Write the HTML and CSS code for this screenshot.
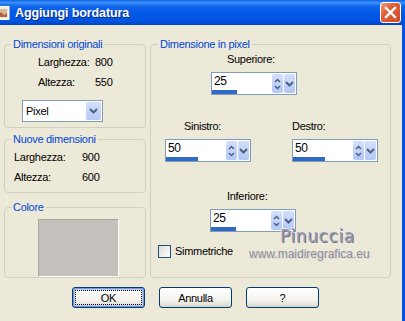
FILE: index.html
```html
<!DOCTYPE html>
<html lang="it">
<head>
    <meta charset="UTF-8">
    <title>Aggiungi bordatura</title>
    <link rel="stylesheet" href="styles.css">
</head>
<body>
    <div class="window">
        <div class="titlebar">
            <svg class="app-icon" width="11" height="14" viewBox="0 0 11 14">
                <rect x="-4" y="0.5" width="14" height="13" fill="#f4ecdf" stroke="#ffffff"/>
                <rect x="-2" y="3" width="10" height="8" fill="#d9b79a"/>
                <path d="M-2 11 L2 6 L5 9 L8 7 L8 11 Z" fill="#b0603c"/>
            </svg>
            <span class="title">Aggiungi bordatura</span>
            <div class="close">
                <svg width="13" height="13" viewBox="0 0 13 13">
                    <path d="M2 2 L11 11 M11 2 L2 11" stroke="#ffffff" stroke-width="2.4" stroke-linecap="square"/>
                </svg>
            </div>
        </div>

        <div class="client">
            <div class="columns">
                <div class="left">
                    <fieldset class="group g-orig">
                        <legend>Dimensioni originali</legend>
                        <div class="dims">
                            <span>Larghezza:</span><span>800</span>
                            <span>Altezza:</span><span>550</span>
                        </div>
                        <div class="select">
                            <span class="select-text">Pixel</span>
                            <span class="drop">
                                <svg width="9" height="6" viewBox="0 0 9 6"><path d="M1 1 L4.5 4.5 L8 1" fill="none" stroke="#4d6185" stroke-width="2"/></svg>
                            </span>
                        </div>
                    </fieldset>

                    <fieldset class="group g-new">
                        <legend>Nuove dimensioni</legend>
                        <div class="dims">
                            <span>Larghezza:</span><span>900</span>
                            <span>Altezza:</span><span>600</span>
                        </div>
                    </fieldset>

                    <fieldset class="group g-color">
                        <legend>Colore</legend>
                        <div class="swatch"></div>
                    </fieldset>
                </div>

                <fieldset class="group g-pixel">
                    <legend>Dimensione in pixel</legend>

                    <div class="field f-top">
                        <label>Superiore:</label>
                        <div class="spin">
                            <div class="spin-val">25<span class="bar" style="width: 25px"></span></div>
                            <span class="sb">
                                <svg width="7" height="12" viewBox="0 0 7 12"><path d="M1 4 L3.5 1.5 L6 4 M1 8 L3.5 10.5 L6 8" fill="none" stroke="#4d6185" stroke-width="1.5"/></svg>
                            </span>
                            <span class="sb">
                                <svg width="9" height="6" viewBox="0 0 9 6"><path d="M1 1 L4.5 4.5 L8 1" fill="none" stroke="#4d6185" stroke-width="2"/></svg>
                            </span>
                        </div>
                    </div>

                    <div class="field-row">
                        <div class="field f-left">
                            <label>Sinistro:</label>
                            <div class="spin">
                                <div class="spin-val">50<span class="bar" style="width: 32px"></span></div>
                                <span class="sb">
                                    <svg width="7" height="12" viewBox="0 0 7 12"><path d="M1 4 L3.5 1.5 L6 4 M1 8 L3.5 10.5 L6 8" fill="none" stroke="#4d6185" stroke-width="1.5"/></svg>
                                </span>
                                <span class="sb">
                                    <svg width="9" height="6" viewBox="0 0 9 6"><path d="M1 1 L4.5 4.5 L8 1" fill="none" stroke="#4d6185" stroke-width="2"/></svg>
                                </span>
                            </div>
                        </div>
                        <div class="field f-right">
                            <label>Destro:</label>
                            <div class="spin">
                                <div class="spin-val">50<span class="bar" style="width: 32px"></span></div>
                                <span class="sb">
                                    <svg width="7" height="12" viewBox="0 0 7 12"><path d="M1 4 L3.5 1.5 L6 4 M1 8 L3.5 10.5 L6 8" fill="none" stroke="#4d6185" stroke-width="1.5"/></svg>
                                </span>
                                <span class="sb">
                                    <svg width="9" height="6" viewBox="0 0 9 6"><path d="M1 1 L4.5 4.5 L8 1" fill="none" stroke="#4d6185" stroke-width="2"/></svg>
                                </span>
                            </div>
                        </div>
                    </div>

                    <div class="field f-bottom">
                        <label>Inferiore:</label>
                        <div class="spin">
                            <div class="spin-val">25<span class="bar" style="width: 25px"></span></div>
                            <span class="sb">
                                <svg width="7" height="12" viewBox="0 0 7 12"><path d="M1 4 L3.5 1.5 L6 4 M1 8 L3.5 10.5 L6 8" fill="none" stroke="#4d6185" stroke-width="1.5"/></svg>
                            </span>
                            <span class="sb">
                                <svg width="9" height="6" viewBox="0 0 9 6"><path d="M1 1 L4.5 4.5 L8 1" fill="none" stroke="#4d6185" stroke-width="2"/></svg>
                            </span>
                        </div>
                    </div>

                    <div class="check-row">
                        <span class="checkbox"></span>
                        <span>Simmetriche</span>
                    </div>
                </fieldset>
            </div>

            <div class="buttons">
                <button class="btn default">OK</button>
                <button class="btn">Annulla</button>
                <button class="btn">?</button>
            </div>

            <div class="watermark">
                <div class="wm-name">Pinuccia</div>
                <div class="wm-site">www.maidiregrafica.eu</div>
            </div>
        </div>
    </div>
</body>
</html>
```

FILE: styles.css
```css
body {
    margin: 0;
    font-family: 'Liberation Sans', Arial, sans-serif;
    font-size: 11px;
    letter-spacing: -0.3px;
    color: #000;
    background: #ece9d8;
}
.window {
    width: 405px;
    height: 321px;
    display: flex;
    flex-direction: column;
    overflow: hidden;
}

/* barra del titolo */
.titlebar {
    height: 25px;
    flex: none;
    display: flex;
    align-items: center;
    background: linear-gradient(to bottom, #0a62e8 0%, #3d8ff7 10%, #1266ec 25%, #0058e6 55%, #0053de 85%, #0044c4 100%);
}
.app-icon {
    margin-left: -1px;
    margin-top: 1px;
}
.title {
    margin-left: 5px;
    color: #fff;
    font-weight: bold;
    font-size: 12.5px;
    letter-spacing: -0.1px;
    text-shadow: 1px 1px 0 #0a2b8a;
}
.close {
    margin-left: auto;
    margin-right: 4px;
    margin-top: -1px;
    width: 19px;
    height: 19px;
    border: 1px solid #fff;
    border-radius: 3px;
    background: linear-gradient(135deg, #f0a58a 0%, #e2603a 35%, #cf4a25 100%);
    display: flex;
    align-items: center;
    justify-content: center;
}

.client {
    flex: 1;
    position: relative;
    padding: 13px 0 0 4px;
    border-right: 3px solid #0552e0;
}
.columns {
    display: grid;
    grid-template-columns: 142px 241px;
    column-gap: 4px;
}
.left {
    display: flex;
    flex-direction: column;
}

/* riquadri */
.group {
    margin: 0;
    padding: 0;
    min-width: 0;
    border: 1px solid #d0d0bf;
    border-radius: 4px;
}
.group legend {
    margin-left: 6px;
    padding: 0 2px;
    line-height: 13px;
    color: #0046d5;
}
.g-orig {
    padding: 1px 0 5px 0;
}
.g-new {
    margin-top: 5px;
    padding: 1px 0 5px 0;
}
.g-color {
    margin-top: 8px;
    flex: 1;
}
.g-pixel legend {
    margin-left: 7px;
}

.dims {
    display: grid;
    line-height: 20px;
}
.g-orig .dims {
    grid-template-columns: 57px auto;
    padding-left: 33px;
}
.g-new .dims {
    grid-template-columns: 68px auto;
    padding-left: 9px;
}

.select {
    margin: 8px 0 0 17px;
    width: 81px;
    height: 22px;
    box-sizing: border-box;
    border: 1px solid #7f9db9;
    background: #fff;
    display: flex;
    align-items: center;
}
.select-text {
    padding-left: 3px;
    flex: 1;
}
.drop {
    width: 15px;
    height: 18px;
    margin-right: 1px;
    border-radius: 2px;
    background: linear-gradient(to bottom, #d3dffb, #b6c9f6);
    display: flex;
    align-items: center;
    justify-content: center;
}

.swatch {
    margin: 5px 0 0 33px;
    width: 81px;
    height: 58px;
    box-sizing: border-box;
    background: #c4c0bc;
    border: 1px solid;
    border-color: #aca899 #fff #fff #aca899;
}

/* campi numerici */
.field {
    display: flex;
    flex-direction: column;
    align-items: flex-start;
}
.field label {
    line-height: 13px;
}
.f-top {
    margin: 2px 0 0 60px;
}
.f-top label {
    padding-left: 16px;
}
.field-row {
    display: flex;
    gap: 41px;
    margin: 25px 0 0 14px;
}
.f-left label {
    padding-left: 19px;
}
.f-bottom {
    margin: 28px 0 0 59px;
}
.f-bottom label {
    padding-left: 17px;
}
.spin {
    margin-top: 6px;
    width: 86px;
    height: 23px;
    box-sizing: border-box;
    border: 1px solid #7f9db9;
    background: #fff;
    display: flex;
    padding-right: 1px;
}
.spin-val {
    flex: 1;
    position: relative;
    padding-left: 2px;
    line-height: 17px;
    font-size: 12px;
}
.bar {
    position: absolute;
    left: 0;
    bottom: 0;
    height: 4px;
    background: #316ac5;
}
.sb {
    width: 11px;
    margin: 1px 0 1px 1px;
    border-radius: 2px;
    background: linear-gradient(to bottom, #d3dffb, #b3c7f6);
    display: flex;
    align-items: center;
    justify-content: center;
}

.check-row {
    margin: 13px 0 0 7px;
    display: flex;
    align-items: center;
    gap: 4px;
    line-height: 13px;
}
.checkbox {
    width: 13px;
    height: 13px;
    box-sizing: border-box;
    border: 1px solid #1c5180;
    background: linear-gradient(135deg, #dcdcd7, #fff);
}

/* pulsanti */
.buttons {
    display: flex;
    gap: 14px;
    margin-top: 9px;
    padding-left: 68px;
}
.btn {
    width: 73px;
    height: 21px;
    padding: 0;
    font-family: inherit;
    font-size: 11px;
    letter-spacing: -0.3px;
    color: #000;
    border: 1px solid #003c74;
    border-radius: 3px;
    background: linear-gradient(to bottom, #fff 0%, #f5f4ef 60%, #e3e0d6 90%, #d6d0c5 100%);
}
.btn.default {
    box-shadow: inset 0 0 0 1px #7a9ad8, inset 0 0 0 2px #b4c8f0;
    outline: 1px dotted #000;
    outline-offset: -4px;
}

/* filigrana */
.watermark {
    position: absolute;
    left: 249px;
    top: 201px;
    pointer-events: none;
}
.wm-name {
    margin-left: 31px;
    font-family: 'DejaVu Sans', sans-serif;
    font-size: 17px;
    line-height: 20px;
    letter-spacing: 0.6px;
    color: #9c9cab;
    text-shadow: 1px 1px 0 #6f6f7c, -1px -1px 0 #e6e6ee;
}
.wm-site {
    margin-top: 2px;
    font-size: 12px;
    line-height: 12px;
    letter-spacing: 0;
    color: #8c8c96;
    text-shadow: 1px 1px 0 #d8d8de;
}
```
